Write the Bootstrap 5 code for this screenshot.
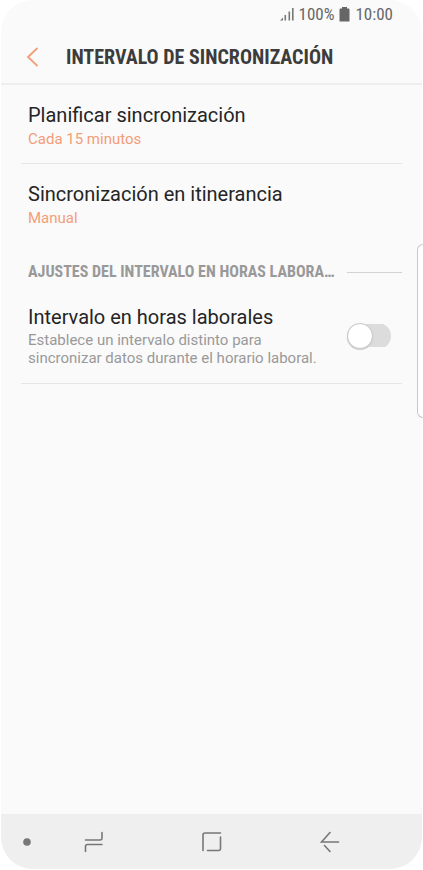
<!DOCTYPE html>
<html lang="es">
<head>
<meta charset="utf-8">
<meta name="viewport" content="width=device-width, initial-scale=1">
<title>Intervalo de sincronización</title>
<link href="https://cdn.jsdelivr.net/npm/bootstrap@5.3.0/dist/css/bootstrap.min.css" rel="stylesheet">
<style>
body { font-family: Roboto, "Liberation Sans", sans-serif; background: #fff; color: #252525; }
.phone { background: #fafafa; border-radius: 32px; margin: 0 1px 1px; min-height: calc(100vh - 1px); }
.status { height: 28px; font-family: "Roboto Condensed", "Liberation Sans Narrow", sans-serif; font-size: 17px; line-height: 28px; color: #666; padding-right: 29px; gap: 5px; }
.topbar { height: 57px; border-bottom: 2px solid #eee; padding: 3px 0 0 24px; }
.topbar h1 { font-size: 20px; line-height: 24px; color: #3c3c3c; margin-left: 26px; }
.narrow { font-family: "Roboto Condensed", "Liberation Sans Narrow", "Liberation Sans", sans-serif; font-weight: 700; }
.settings { padding: 0 20px; }
.entry { color: inherit; padding: 17px 7px 13px; }
.entry-line { border-bottom: 1px solid #e6e6e6; }
.entry-title { font-size: 20px; line-height: 26px; }
.entry-value { font-size: 15px; line-height: 22px; color: #f49d78; }
.entry-note { font-size: 15px; line-height: 18px; color: #999; margin-top: 1px; }
.group { gap: 12px; padding: 18px 0 0 7px; }
.group h2 { font-size: 16px; line-height: 24px; color: #999; }
.group-rule { height: 1px; background: #d2d2d2; }
.switch-entry { padding: 20px 11px 16px 7px; }
.toggle { appearance: none; width: 44px; height: 26px; border-radius: 13px; position: relative; cursor: pointer; background: linear-gradient(#dcdcdc, #dcdcdc) center / 44px 23px no-repeat; }
.toggle::before { content: ""; position: absolute; left: 0; top: 0; width: 26px; height: 26px; border-radius: 50%; background: #fff; border: 1px solid #c8c8c8; box-shadow: 0 1px 1px #ccc; }
.toggle:checked::before { left: 18px; }
.edge { position: absolute; right: 0; top: 244px; width: 6px; height: 174px; background: #fff; border: 1px solid #c8c8c8; border-right: 0; border-radius: 6px 0 0 6px; }
.softkeys { height: 55px; background: #efefef; padding: 1px 82px 0 22px; gap: 53px; }
</style>
</head>
<body>
<div class="phone d-flex flex-column overflow-hidden">
  <div class="status d-flex justify-content-end align-items-center">
    <svg width="14" height="14" viewBox="0 0 14 14" fill="#777" aria-hidden="true"><path d="M0 13.500 3 10.500V13.500ZM4.500 8h1.600v5.500H4.500ZM8.500 4.500h1.600v9H8.500ZM12 1H13.600v12.500h-1.600Z"/></svg>
    <span>100%</span>
    <svg width="11" height="15" viewBox="0 0 11 15" fill="#666" aria-hidden="true"><path d="M3 0h5v1.500h1.500q1 0 1 1V14q0 .5-.5.5H1q-.5 0-.5-.5V2.500q0-1 1-1H3Z"/></svg>
    <span>10:00</span>
  </div>
  <header class="topbar d-flex align-items-center">
    <button class="btn p-0 border-0 d-flex" type="button" aria-label="Atrás"><svg width="15" height="20" viewBox="0 0 15 20" fill="none" stroke="#f49d78" stroke-width="1.800"><path d="M12.500 1 3 10l9.500 9"/></svg></button>
    <h1 class="narrow mb-0 text-nowrap">INTERVALO DE SINCRONIZACIÓN</h1>
  </header>
  <main class="settings flex-grow-1">
    <a class="entry entry-line d-block text-decoration-none" href="#planificar">
      <div class="entry-title">Planificar sincronización</div>
      <div class="entry-value">Cada 15 minutos</div>
    </a>
    <a class="entry d-block text-decoration-none" href="#itinerancia">
      <div class="entry-title">Sincronización en itinerancia</div>
      <div class="entry-value">Manual</div>
    </a>
    <div class="group d-flex align-items-center">
      <h2 class="narrow mb-0 text-nowrap">AJUSTES DEL INTERVALO EN HORAS LABORA…</h2>
      <div class="group-rule flex-grow-1"></div>
    </div>
    <div class="switch-entry entry-line d-flex align-items-center justify-content-between">
      <label for="laboral">
        <span class="entry-title d-block">Intervalo en horas laborales</span>
        <span class="entry-note d-block">Establece un intervalo distinto para<br>sincronizar datos durante el horario laboral.</span>
      </label>
      <input class="toggle flex-shrink-0 m-0" id="laboral" type="checkbox" role="switch">
    </div>
  </main>
  <nav class="softkeys d-flex align-items-center" aria-label="Navegación">
    <button class="btn p-0 border-0 d-flex" type="button" aria-label="Mostrar barra"><svg width="8" height="8" viewBox="0 0 8 8"><circle cx="4" cy="4" r="3.800" fill="#777"/></svg></button>
    <div class="d-flex flex-grow-1 align-items-center justify-content-between">
      <button class="btn p-0 border-0 d-flex" type="button" aria-label="Recientes"><svg width="20" height="22" viewBox="0 0 20 22" fill="none" stroke="#777" stroke-width="1.600" stroke-linecap="round"><path d="M1.500 9H16q2 0 2-2V1.500M1.500 20.500V15.500q0-2 2-2H18"/></svg></button>
      <button class="btn p-0 border-0 d-flex" type="button" aria-label="Inicio"><svg width="22" height="22" viewBox="0 0 22 22" fill="none" stroke="#777" stroke-width="1.600" stroke-linecap="round"><path d="M2 19.500V4q0-2 2-2h15.500M19.500 6v11.500q0 2-2 2H6.500"/></svg></button>
      <button class="btn p-0 border-0 d-flex" type="button" aria-label="Volver"><svg width="20" height="22" viewBox="0 0 20 22" fill="none" stroke="#777" stroke-width="1.600" stroke-linecap="round"><path d="M10 1.500 1.500 11H18.500M4.500 14.500 10 20.500"/></svg></button>
    </div>
  </nav>
</div>
<div class="edge"></div>
<script src="https://cdn.jsdelivr.net/npm/bootstrap@5.3.0/dist/js/bootstrap.bundle.min.js"></script>
</body>
</html>
